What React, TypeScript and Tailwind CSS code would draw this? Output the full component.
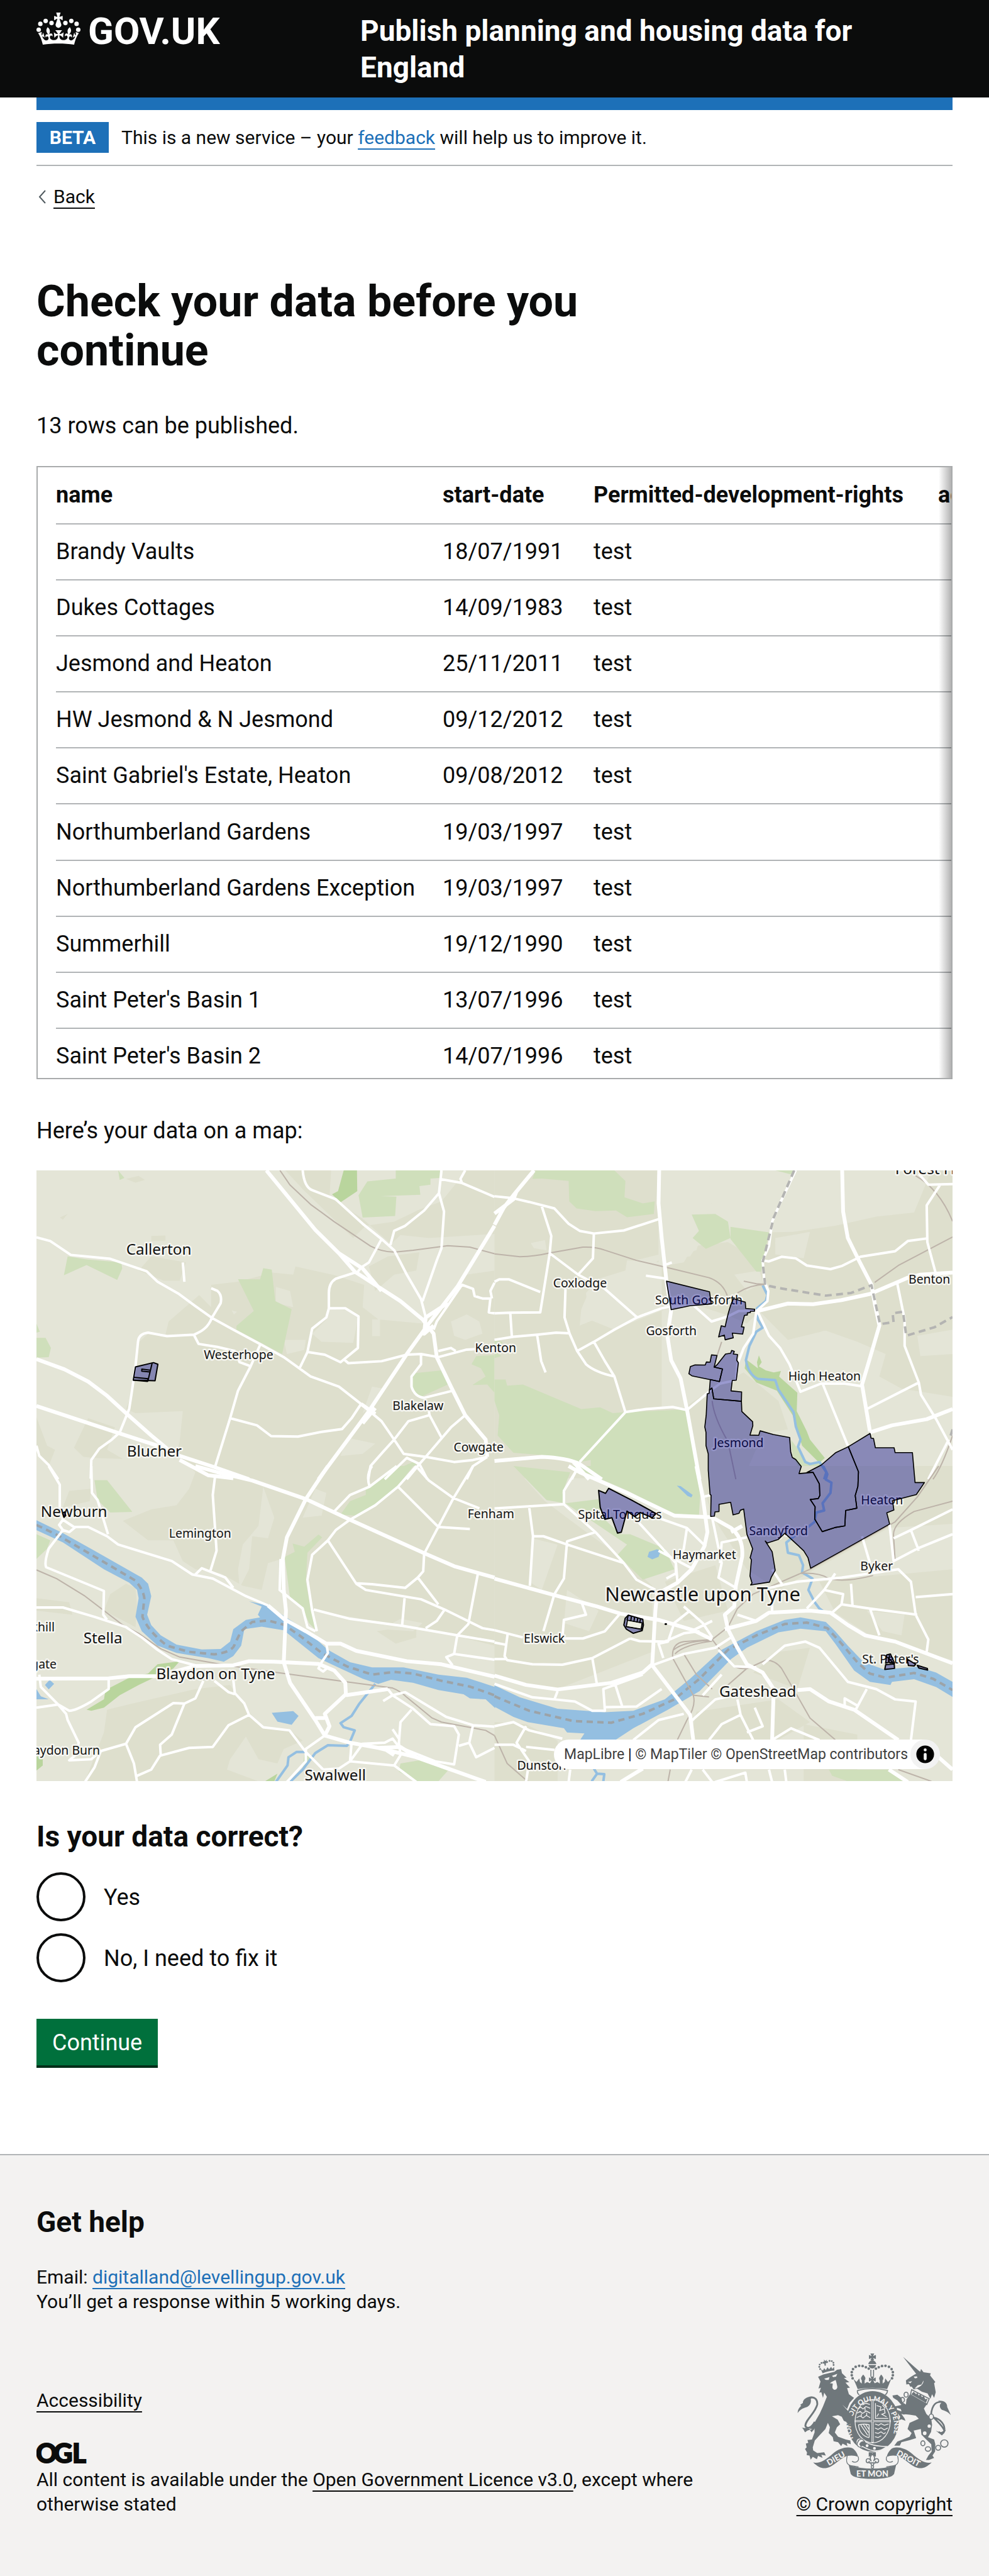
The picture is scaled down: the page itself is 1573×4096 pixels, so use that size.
import React from "react";

const columns = ["name", "start-date", "Permitted-development-rights", "address"];

const rows: [string, string][] = [
  ["Brandy Vaults", "18/07/1991"],
  ["Dukes Cottages", "14/09/1983"],
  ["Jesmond and Heaton", "25/11/2011"],
  ["HW Jesmond & N Jesmond", "09/12/2012"],
  ["Saint Gabriel's Estate, Heaton", "09/08/2012"],
  ["Northumberland Gardens", "19/03/1997"],
  ["Northumberland Gardens Exception", "19/03/1997"],
  ["Summerhill", "19/12/1990"],
  ["Saint Peter's Basin 1", "13/07/1996"],
  ["Saint Peter's Basin 2", "14/07/1996"],
];

type Tile = {
  matrix: string;
  land?: string;
  urban?: string;
  holes?: string;
  green?: string;
  darkGreen?: string;
  water?: string;
  stream?: string;
  rail?: string;
  minor?: string;
  major?: string;
  ferry?: string;
  boundary?: string;
};

// Each tile keeps its own coordinate grid; the matrix places it on the 1500x1000 map.
const tiles: Tile[] = [
  {
    matrix: "matrix(0.51658 0 0 0.33333 -60 -16)",
    urban:
      "M525 855L535 790L632 660L670 720L670 610L755 595L865 550L930 560L937 520L1060 562L1155 610L1150 720L1200 780L1340 800L1380 760L1480 560L1568 540V1565H615L620 1530L560 1440L570 1380L580 1230L430 1240L400 1220L420 1140L435 900L470 850ZM905 48H1050L1045 180L1150 285L1240 410L1270 365L1360 380L1568 360V48H1480L1400 200L1330 240L1250 300L1160 320L1120 380L960 140ZM440 540L480 470L590 500L570 590L520 590ZM480 370L525 368L525 395L480 395ZM200 290L215 262L190 280ZM400 90L440 75L460 95L430 108ZM235 1410L280 1265L365 1310L340 1420L390 1465L300 1460L265 1455ZM116 1260L150 1400L175 1420L155 1500L116 1440ZM1170 520L1230 470L1330 450L1320 540L1250 560L1190 640Z",
    holes:
      "M1045 730L1100 735L1137 765L1120 895L1020 890L990 850L1035 780ZM1430 790L1480 755L1520 790L1530 850L1475 880L1440 860ZM875 620L920 640L930 720L875 700ZM900 880L970 880L965 930L910 950ZM1100 1360L1190 1390L1150 1440L1080 1450ZM1180 1110L1215 1120L1190 1200L1150 1240ZM1180 780H1205V862H1180ZM735 735L752 742L742 756Z",
    green:
      "M203 563L215 470L275 485L385 500L388 530L372 586L275 513ZM755 582L825 583L835 528L862 535L873 690L925 730L895 950L750 830V812L805 738ZM1165 102L1255 88V48H1395V85L1365 88V118L1330 125L1333 168L1205 175L1257 177L1253 272L1150 280L1137 170ZM116 870H145L162 920L155 965L116 968ZM1308 1045L1400 1030L1420 1100L1335 1160L1308 1140ZM1510 960L1568 955V1140L1545 1100L1498 1102L1540 1060L1525 1020L1495 1000ZM375 48L395 85L380 95ZM1250 1520L1310 1480L1320 1490L1290 1560H1240ZM116 800L127 840L116 845Z",
    darkGreen: "M1090 48H1132L1133 150L1080 205L1053 165L1072 150Z",
    rail: "M888 48L920 120L985 215L1060 300L1175 420C1200 440 1230 452 1260 448L1310 440L1420 418L1490 425L1568 457",
    minor:
      "M116 377L160 395L225 463L350 482L465 543L500 595L568 655L620 715L672 772L740 830L830 905L900 965L985 1060L1075 1110L1145 1195L1210 1280L1250 1370L1280 1440L1350 1455L1440 1480L1500 1470L1545 1455M672 772C660 820 640 840 615 855L530 862L470 845Q440 850 438 890L430 1010L418 1140L410 1220L380 1335L355 1370L315 1415L290 1470L288 1562M672 772L700 700Q705 660 690 640L670 627M615 855L630 900L690 915L745 935L760 990L795 1010M825 905L795 1010L755 1130L730 1265L683 1500M730 1265L815 1300L860 1353L945 1355L1020 1332L1085 1318L1115 1265L1145 1195M1125 550L1065 580Q1043 600 1043 650V725L1035 770L990 825L975 940L950 1020M1043 725H1095L1137 765L1135 920L1080 990L1030 953L975 940M1090 975L1105 995L1210 985L1290 953L1335 950L1390 965L1480 928L1568 920M1335 950V1000L1305 1060V1110Q1315 1160 1345 1165L1435 1130M960 48Q965 130 990 145L1065 190L1150 310L1210 385L1250 440L1290 560L1335 680L1350 770M1400 48L1392 160L1408 250L1400 430L1385 490L1340 690M1395 90L1465 110L1568 178M1475 48L1460 90L1465 110M1392 160L1345 245L1285 320L1250 345L1238 415M1210 385L1170 500L1145 525L1130 555M1375 830L1385 790L1465 610L1500 630L1505 665L1530 677L1555 677L1550 745L1568 750M1475 1250L1430 1310L1350 1455L1330 1490L1290 1565M1360 1230L1362 1250L1295 1280L1250 1370L1215 1430L1175 1500L1168 1565M1362 1250L1400 1360M116 1400L125 1450L155 1495L185 1565M580 500L585 595M1220 1565L1290 1460L1330 1490L1355 1565M1545 1455L1500 1500L1480 1565M1390 935L1430 920L1445 935M1568 600L1555 640L1560 677",
    major:
      "M845 48L1000 340L1075 455L1125 545L1190 610L1270 690L1340 780L1375 850L1385 965L1430 1110L1475 1250L1540 1370L1545 1455M1568 320L1450 620L1355 810L1290 950L1170 1230L1010 1565M1420 700L1350 770L1345 850L1375 810M1075 455L1150 530L1210 640M116 975L205 1025L280 1085L340 1155L400 1240L480 1350L550 1440L680 1505L790 1565M116 1205L370 1335L530 1415M570 1470L660 1545L740 1560M1145 1195L1190 1245M1190 1215L1150 1290",
  },
  {
    matrix: "matrix(0.51658 0 0 0.33333 750 -16)",
    urban:
      "M0 48H520V500L420 490L415 540L330 580L290 650L300 780L380 830L540 730L620 700L740 760L800 800L840 740L930 880L1050 835L1150 890L1240 950L1220 1060L1290 1120L1452 1160V48H1385L1330 255L1210 275L1110 310L1080 320L945 350L870 352L850 500L740 400L630 420L600 500L530 520V1220L600 1215L700 1110L790 1040L900 1180L930 1320L850 1340L790 1560H0Z",
    holes:
      "M525 48H680L690 240L600 262L585 270L595 405L650 390L640 440L540 480ZM115 405L160 390L165 440L125 430ZM300 640L360 700L350 760L270 810L275 730ZM420 500L600 430L650 400L620 470L520 490L430 600ZM760 560L840 540L850 600L800 640ZM930 900L960 885L1045 835L1120 880L1235 950L1225 1030L1170 1110L1060 1090L960 1120L930 1010ZM1340 860L1452 830V950L1350 960ZM980 1250L1070 1210L1090 1270L1010 1330ZM1200 1180L1280 1190L1270 1260L1200 1290ZM790 390L850 370L830 545ZM890 380L1000 350L980 480L890 460Z",
    green:
      "M120 90L130 48H380L415 100L412 180L470 210L508 200L505 262L420 278L385 245L320 248L260 235L237 200L235 100L150 88ZM625 265L700 262L740 300L748 380L670 433L628 380L648 345ZM748 325L870 352L845 545H830L748 385ZM0 1075H35L40 1105L90 1100L275 1220L335 1212L375 1240L415 1235L610 1222L655 1565H330L305 1500V1470L270 1480L185 1450L60 1435L10 1350L15 1250L0 1180ZM890 48H950L945 70ZM940 1370L990 1480L1040 1490L975 1535L945 1450ZM0 885L25 890L20 920L0 915ZM0 935L22 960L0 970Z",
    darkGreen:
      "M797 975L835 1020L832 990L838 957L847 990L838 1010L860 1030L885 1040L908 1033L902 1060L960 1140L958 1230L990 1330L1000 1370L1047 1460L1030 1485L975 1400L945 1250L895 1130L830 1090L793 1020Z",
    stream:
      "M850 613L865 660L860 690L832 725L835 780L850 820L830 840L808 910L797 980Q805 1050 835 1072L890 1078L900 1125L948 1235L955 1305L970 1370L962 1405L985 1480L1000 1490L1030 1480L1052 1530L1045 1565",
    rail: "M0 458L80 472Q130 470 170 455L280 425Q320 422 350 440L450 490L560 530L680 575Q725 600 738 665M790 592L830 605L860 608Q810 610 770 650M1205 598L1280 515L1452 375M1335 75Q1410 140 1452 298M1452 1350Q1420 1500 1390 1565M720 890L705 960M690 1180Q695 1260 740 1380L765 1565",
    minor:
      "M0 175L60 185L110 203L190 235L235 310L270 345L315 358L410 343L520 288M150 225L180 370L175 455L160 600L145 745L50 747L0 750M315 358L312 480L265 560M175 455L265 560L350 630L452 770M0 595L15 583H45L145 645M50 747L55 865M225 630L222 770L238 850L262 935L290 1000Q320 1040 380 1060M0 880L60 865L135 855L195 845L238 848M135 855L148 985L162 1040M262 935L315 890L380 830L452 770L530 725L560 715L630 710L688 790L740 765L775 738L830 738M315 890L350 985L380 1060L415 1235L480 1220L565 1210L610 1225L680 1135L715 1095L760 1080M415 1235L270 1480M245 1565L270 1490M850 490L870 495L910 472L955 480L990 515L1065 533L1100 518L1160 472L1270 445L1310 395L1372 382M955 48L905 210L880 300L870 420L850 490L855 590L868 640L865 690L830 740L820 850L790 920L770 1000L765 1080M1452 115L1375 118L1345 65M1412 120L1370 220L1372 400L1398 550M835 745L870 860L905 920L935 1000L970 1135L1035 1095L1110 1095L1165 1108M1040 1095L1120 1400M1275 590L1300 780V910L1345 1090L1352 1150L1400 1270L1452 1420M1345 1090L1180 1220M1440 1370L1375 1565M480 565L545 580M545 510L562 500",
    major:
      "M0 315L30 230L60 170L125 48M0 260L60 190L70 150M522 48L520 210L530 380L545 590L560 735L548 860L560 980L590 1070L610 1222L650 1565M1102 48L1105 250L1120 380L1155 490L1195 610L1205 700L1220 810L1190 970L1165 1100L1190 1330M830 740L930 702L1010 705L1100 685L1190 655L1310 575L1350 560L1452 550M1190 1335L1260 1300L1370 1270L1452 1220M0 1475L150 1455Q230 1460 270 1490L340 1565M250 1480L300 1565",
    boundary:
      "M950 48L885 280L850 500L858 612L910 628L1050 663L1130 650L1195 612L1222 803L1265 793L1262 750L1295 742L1305 860L1395 818L1452 768M1452 1320L1446 1350",
  },
  {
    matrix: "matrix(0.51658 0 0 0.33801 -60 484)",
    urban:
      "M620 30L700 0H1568V870L1440 820L1000 700L960 690L930 560L905 440L895 450L850 470L830 600L770 580L700 520L620 500L580 460L550 360L470 360L390 265L480 210L560 190L600 110ZM420 1150L620 1080L730 1060L790 1190L830 1270L920 1280L960 1330L900 1370L880 1440L820 1420L780 1310L730 1420L720 1470L820 1527H270L330 1290L340 1180ZM330 700L350 620L400 570L430 590L435 680L430 780L380 740ZM116 640L220 660L230 720L116 700ZM1195 800L1320 770V830L1255 860ZM220 120L290 110L285 170L200 200Z",
    holes: "M835 100L870 250L850 350L800 340L790 500L760 590L755 500L770 380L820 290ZM1000 110L1035 130L1020 240L960 250ZM1270 740L1340 760L1310 800L1210 790Z",
    green:
      "M300 68H340L420 222L350 225L310 165ZM903 440L935 415L928 375L965 390L1010 332L1022 345L975 420L970 560L985 690L1005 800L980 760L960 690L920 640ZM1080 235L1110 170L1160 140V115L1250 0H1310L1260 100L1190 190L1130 240ZM116 330L160 360L150 400L116 450ZM1270 1440L1330 1425L1420 1475L1390 1527H1320L1265 1480ZM965 1400L990 1410L960 1460Z",
    darkGreen:
      "M275 1180L330 1130L335 1085L410 1025L470 1005L500 960L570 945L550 980L440 1060L380 1110L330 1170L290 1185ZM116 1405H136V1450L116 1475ZM840 1527L880 1490L870 1527Z",
    water:
      "M116 262L200 325L300 410L450 540L470 570L480 630L467 720L480 770L510 820L560 865L640 888L700 886L730 850L740 790L780 745L825 733L818 720L830 680L790 655L850 675L900 725L975 800L1040 890L1110 950L1180 975L1280 975L1390 1010L1480 1025L1570 1070V1172L1540 1130L1490 1125L1470 1105L1390 1085L1310 1050L1240 1035L1200 1055L1150 1030L1080 980L1010 930L900 795L830 778L775 790L765 870L740 920L710 948L660 930L560 905L500 870L450 800L430 730L440 640L435 600L410 565L330 500L200 370L116 310ZM862 1195L930 1187L947 1210L925 1253L880 1238ZM158 1035L172 1055L155 1082L143 1060ZM116 1080L130 1115L155 1130L116 1130Z",
    stream:
      "M1190 1055L1140 1150L1115 1210L1080 1245L1090 1265L1125 1280L1110 1335L1100 1355L1040 1352L1000 1390L960 1470L920 1530M970 1385L940 1385L915 1410L912 1450L875 1530",
    rail: "M116 503L180 545L270 630L390 770L440 810L510 885L570 925L720 965L880 1000L1100 1045L1245 1075Q1270 1090 1290 1120L1370 1220L1400 1240L1540 1280L1568 1305",
    minor:
      "M155 0L190 90L190 200L200 260L235 295H280L340 340L375 380L545 460L610 525L675 545L780 630L850 675M290 0L292 130L310 165L343 330M200 260L188 285L200 310L155 400Q140 470 147 490L330 605L328 720L340 745M200 310L220 320L240 295M116 685H200L300 730L400 780L450 830L500 890L545 935L620 965M345 1028V1080L290 1140Q240 1185 220 1185L185 1155L130 1070L125 1010M116 1170L185 1155L210 1200L215 1230L250 1340L240 1400L220 1425L290 1420L320 1380L400 1345M645 1040L620 1125L585 1150L545 1300L508 1350L510 1402L600 1365L675 1360L725 1255L790 1205M585 1150L550 1148L430 1265L400 1345L425 1440L435 1530M435 1500L480 1470L508 1402M320 1380L300 1460L270 1530M740 1035L745 1100L775 1150L790 1205L835 1265L918 1280L970 1385L1025 1470M680 1040L725 1095L745 1105M1030 1305L970 1370V1430L910 1530M683 40L675 140L687 410L668 505M620 525L640 495L715 540L740 590M890 450L887 600L960 690L975 780L1000 800M1110 260L1065 310L1040 360L990 430L975 550L990 700L1005 800M1320 0L1262 100L1190 190L1110 260M1262 100L1390 295L1490 305M1325 10L1360 70L1438 155L1520 205M1500 0L1438 155L1345 425L1342 510L1325 540L1285 590L1180 572L1130 568M1040 360L1130 570L1160 600L1335 645L1410 695L1530 785L1568 795M1325 540L1390 670M1410 695L1385 750L1350 785M1283 640L1275 775M1515 525L1485 765L1450 820L1440 910M995 695L1110 740L1280 775L1450 820L1568 850M1568 938L1440 910L1415 925L1435 965M1035 860L1040 905L1020 950L1010 980L1025 995L1040 975M1230 1080L1245 1110L1310 1175L1365 1250L1440 1260L1455 1300L1440 1445L1380 1430L1265 1360L1245 1320L1220 1340L1150 1345L1110 1430M1245 1110L1285 1095L1415 1215L1500 1255L1568 1262M1305 1180L1270 1240L1265 1340L1270 1400L1250 1450L1110 1430L1115 1340M1250 1450L1320 1530M1110 1430L1075 1465L1025 1470M1500 1255L1488 1340L1510 1410L1568 1365M1488 1340L1455 1355M1245 1110L1215 1138M1180 0Q1160 40 1172 100M1258 0L1172 100L1110 140L1060 220M1245 1275L1265 1320",
    major:
      "M620 0L690 30L800 70L970 160L1110 260L1350 425L1440 485L1568 540M1040 0L970 160L910 345L897 450L900 600L907 700L900 950L920 1050L1000 1230L1030 1305L1110 1340L1200 1365L1320 1410L1540 1530M850 675L900 740L970 800L1035 860H1080L1130 895L1290 945L1400 960L1568 1020M116 1030L345 1028L410 1018L500 1018L620 968L740 965L790 945L870 948L1010 958L1060 990L1095 1050L1097 1105L1030 1200L1045 1260L1030 1305M1000 1220H1030M1097 1110L1230 1080M1200 1365L1270 1360L1320 1410M1220 1370L1250 1400",
    ferry:
      "M116 285L190 340L330 465L430 555Q455 600 458 640L452 730Q470 800 530 870L600 900L680 912Q740 900 745 860L765 800L800 755L850 748L900 768L950 820L1020 905L1100 970L1180 1010L1250 997L1310 1005L1400 1040L1490 1068L1568 1110",
  },
  {
    matrix: "matrix(0.51658 0 0 0.33801 750 484)",
    urban:
      "M0 0L60 0L160 170L300 330L400 440L500 580V900L200 1080L0 1030ZM1030 560L1452 500V940L1200 830L1080 710ZM640 1190L900 1130L1000 1240L900 1325H620ZM0 1240L100 1250L200 1330V1527H0ZM540 560L700 480L740 700L600 750ZM640 0H1452V280L1250 300L900 600L800 500L690 240ZM980 1250L1150 1300V1527H980ZM820 1000L900 900L1000 880L960 1080Z",
    holes: "M120 350L200 380L150 600L110 560ZM230 600L330 700L300 800L220 760ZM1180 700L1300 720L1290 820L1230 800ZM290 40L350 0L420 100L350 90ZM560 80L640 90V200L590 190Z",
    green:
      "M60 0L240 30L215 130L225 180L165 165ZM240 0H640L652 145L648 242L560 228L420 118ZM225 180L330 160L350 260L400 330L430 330L540 400L570 500L470 550L390 430L420 380ZM1060 1470H1250L1300 1527H1120L1070 1500Z",
    water:
      "M0 1062L80 1120L200 1175L350 1192L440 1185L540 1130L620 1030L720 890L830 800L920 745L970 733L1050 755L1080 800L1120 870L1170 950L1235 985L1340 972L1400 1000L1452 1045V1118L1400 1070L1330 1032L1260 1045L1255 1060L1190 1045L1140 990L1080 860L1050 800L970 788L900 805L800 880L750 935L650 1090L550 1180L440 1270L380 1330H270L285 1295L230 1290L220 1270L105 1240L60 1215L-1 1165ZM490 415L515 403L527 410L520 440L500 452L485 440ZM578 95L590 97L628 140L624 152L612 145Z",
    stream:
      "M1042 0L1055 40L1050 65L1068 80L1065 130L1040 180L1045 215L1020 225L1015 270L990 300L950 340L925 370L930 420L965 432L978 480L975 515L1008 545L995 600L1015 660L1030 690L1043 705M315 1465L325 1490L348 1492L345 1527M325 1490L308 1527",
    rail: "M1408 0L1340 150L1270 270L1000 500L820 620L770 690L740 780L690 840L600 850Q560 860 565 930L630 1110Q640 1160 610 1230L580 1325M690 840L730 920L760 970Q790 990 810 975L860 940Q890 940 910 980L1000 1220L1080 1325M1452 170L1330 220Q1260 280 1265 340L1270 460M970 520Q1030 515 1060 545Q1110 565 1200 530M568 890Q600 850 680 845M572 910Q600 865 690 848M740 1060L800 980M630 1110L680 1118M0 1305L40 1440L105 1527M557 1470L550 1527M1280 1470L1385 1527M600 910L640 1010L690 1080",
    minor:
      "M260 20L220 120L220 185L0 205M220 185L320 320L410 470L450 550L510 600M110 200L122 340L112 580M122 340H155L230 380L410 470M320 320L230 365L220 545L190 620L155 800M275 655L290 720L220 745L215 835L280 835L350 800L395 720M0 795L90 830M0 855L35 865M42 810L32 920L40 940L120 960L215 962L310 930L430 835M0 935H40M310 930L325 1060M430 835L460 848L540 850L600 810L650 800M0 1055L120 1120L190 1130L255 1140L310 1185H350L345 1080L470 1010M200 1090L190 1130M350 1168L450 1165L530 1080M380 1045L405 1165M455 270L575 470L580 565M480 230L610 300L600 400L590 440M610 300L670 390M520 410L625 495M575 470L575 520L545 545M690 250L720 470L710 540L765 590M800 345L720 370L715 470M880 500L915 580M1252 283L1265 460L1340 400L1452 330M1452 210L1320 310L1265 350M1320 310L1345 410M1165 340L1190 470M870 590L960 560L1100 540L1280 500L1320 560L1335 720L1375 840L1370 900M1080 520L1045 600L1105 620L1100 670L1070 710M1130 570L1135 680M1335 635L1452 620M1100 670L1190 690L1340 720M1190 690L1220 820M1045 600L990 690M500 965L600 910L700 880L750 830M535 930L520 860L550 850L570 760L620 700M600 680L660 760L690 830M770 720L830 750M850 960L920 870L985 850L1030 880L1120 1045L1210 1080L1270 1130L1335 1140L1320 1327M1180 1080L1145 1180M1110 1165V1125L1150 1160M770 1130L780 1205L720 1250L680 1327M780 1205L820 1327M880 1327L940 1270L1030 1327M825 1170L850 1260L800 1290M440 1327L520 1230L600 1200M620 1240L700 1130L760 1110M710 890L760 970L830 975M660 1110L720 1010M0 1260L60 1240L110 1280L215 1320M100 1260L70 1340L110 1430L100 1530M0 1350H60L100 1380M100 1360L190 1375M240 1470L235 1530M625 1470L605 1530M660 1470L690 1530M870 1470L880 1530M700 1530L795 1485L800 1530M920 1470L925 1530M630 795L690 750M880 600V700M660 150L685 140",
    major:
      "M235 0L270 30L420 130L570 240L690 248L750 300Q790 350 785 440L765 580L760 680L730 720L740 790L770 880L800 960L850 1000L885 1080L880 1327M640 0L660 150L675 320L665 390L625 500L580 565L515 620L510 700L500 960L470 1000L370 1050L200 1082L100 1060L0 1015M0 545L190 625L325 680L400 715L520 745L630 795L690 840M500 965L620 1205L630 1327M730 790L830 750L870 710L1000 700L1065 710L1120 770L1175 820L1270 850L1452 955M960 1085L1000 1080L1060 1140L1140 1180L1280 1327M400 1530L470 1465M1250 1470L1310 1530M1400 1400L1452 1470M785 290L750 320",
    ferry:
      "M0 1115L110 1185L250 1235L370 1243L470 1200L570 1130L650 1030L740 890L830 820L920 765L990 758L1055 785L1100 860L1150 950L1190 1005L1240 1025L1330 1002L1390 1030L1452 1085",
  },
];

const labels: [string, number, number, number][] = [
  ["Callerton", 147, 138, 25],
  ["Westerhope", 274, 309, 20],
  ["Blucher", 148, 468, 25],
  ["Blakelaw", 583, 392, 20],
  ["Cowgate", 683, 460, 20],
  ["Kenton", 718, 298, 20],
  ["Coxlodge", 846, 191, 20],
  ["South Gosforth", 1013, 219, 20],
  ["Gosforth", 998, 270, 20],
  ["High Heaton", 1231, 344, 20],
  ["Benton", 1428, 185, 20],
  ["Forest Hall", 1406, 6, 25],
  ["Jesmond", 1109, 453, 20],
  ["Newburn", 7, 567, 25],
  ["Lemington", 217, 601, 20],
  ["Fenham", 706, 569, 20],
  ["Stella", 77, 774, 25],
  ["Blaydon on Tyne", 196, 833, 25],
  ["Swalwell", 439, 999, 25],
  ["Spital Tongues", 887, 570, 20],
  ["Haymarket", 1042, 636, 20],
  ["Sandyford", 1167, 597, 20],
  ["Heaton", 1350, 547, 20],
  ["Byker", 1349, 655, 20],
  ["Newcastle upon Tyne", 931, 705, 32],
  ["Elswick", 798, 773, 20],
  ["Gateshead", 1118, 862, 25],
  ["St. Peter's", 1352, 807, 20],
  ["Dunston", 787, 981, 20],
];

const clippedLabels: [string, number, number][] = [
  ["khill", 30, 755],
  ["gate", 33, 815],
  ["Blaydon Burn", 104, 956],
];

function TileBase({ t }: { t: Tile }) {
  return (
    <g transform={t.matrix}>
      <path d={t.urban} fill="#dedfcd" />
      <path d={t.holes} fill="#e4e5d7" />
      <path d={t.green} fill="#cfdfbb" />
      <path d={t.darkGreen} fill="#b9d59d" />
    </g>
  );
}

function TileWater({ t }: { t: Tile }) {
  return (
    <g transform={t.matrix} fill="none" strokeLinejoin="round">
      <path d={t.water} fill="#94bfe1" />
      <path d={t.stream} stroke="#94bfe1" strokeWidth="4" vectorEffect="non-scaling-stroke" />
      <path d={t.ferry} stroke="#9ca3a8" strokeWidth="4" strokeDasharray="10 7" vectorEffect="non-scaling-stroke" />
    </g>
  );
}

function TileLines({ t }: { t: Tile }) {
  return (
    <g transform={t.matrix} fill="none" strokeLinejoin="round">
      <path d={t.rail} stroke="#bdb3a9" strokeWidth="2" vectorEffect="non-scaling-stroke" />
      <path d={t.minor} stroke="#fff" strokeWidth="4" vectorEffect="non-scaling-stroke" />
      <path d={t.major} stroke="#fff" strokeWidth="6" vectorEffect="non-scaling-stroke" />
      <path d={t.boundary} stroke="#b4b4b2" strokeWidth="4" strokeDasharray="11 7" vectorEffect="non-scaling-stroke" />
    </g>
  );
}

function MapDrawing() {
  return (
    <svg viewBox="0 0 1500 1000" className="block w-full" role="img" aria-label="Map of your data around Newcastle upon Tyne">
      <rect width="1500" height="1000" fill="#e4e5d7" />
      {tiles.map((t, i) => (
        <TileBase key={i} t={t} />
      ))}
      {tiles.map((t, i) => (
        <TileWater key={i} t={t} />
      ))}
      {tiles.map((t, i) => (
        <TileLines key={i} t={t} />
      ))}
      <g fontFamily="'Noto Sans', sans-serif" fill="#111" stroke="#f5f5f0" strokeWidth="5" strokeLinejoin="round" paintOrder="stroke">
        {labels.map(([name, x, y, size]) => (
          <text key={name} x={x} y={y} fontSize={size}>
            {name}
          </text>
        ))}
        {clippedLabels.map(([name, x, y]) => (
          <text key={name} x={x} y={y} fontSize="20" textAnchor="end">
            {name}
          </text>
        ))}
      </g>
      <g fill="#000088" fillOpacity="0.4" stroke="#000" strokeLinejoin="round">
        <g transform="matrix(0.33333 0 0 0.33333 1020 124)" strokeWidth="5">
          <path d="M35 172L246 224L255 284L150 293L58 312Z" />
          <path d="M365 258L422 275L424 306L468 310L467 320L447 320L447 326L432 328L432 338L418 340L403 396L416 398L409 432L358 427L363 450L323 460L319 437L291 446L304 391L323 396Q345 290 365 258Z" />
          <path d="M256 534L283 537L269 594L310 603L295 665L160 637L145 627L152 592L175 583L225 584L231 569L249 570Z" />
          <path d="M283 583L325 530L350 526L355 512L368 517L363 530L384 532L380 560L388 573L378 658L358 660L352 711L404 716L403 762L267 750L258 697L246 706L250 655L295 665L310 603L269 594Z" />
          <path d="M246 706L258 697L267 750L403 762L405 812L458 862L459 882L445 928L488 929L495 907L560 925L640 940L645 1010L653 1038L670 1048L697 1082L686 1117L755 1111L786 1168L788 1225L780 1240L741 1244L765 1280L763 1340L800 1402L862 1382L911 1374L915 1298L970 1287L962 1225L975 1180L978 1108L928 985L1035 920L1040 943L1052 945L1061 990H1153L1158 1014H1243L1256 1161H1302L1262 1220L1145 1250L1152 1296L1117 1310L1131 1365L890 1500L743 1582L730 1530L709 1496L616 1410L585 1440L530 1458L520 1448L554 1501L569 1592L550 1625L541 1650L448 1664L455 1655L445 1620L452 1540L446 1530L458 1486L440 1440L430 1415L414 1291L398 1297L391 1312L362 1320L350 1258L293 1268V1303L273 1305L270 1326L252 1327L254 1223L249 1220L240 1100V1020L229 980V915L223 888L230 830L235 725L244 723Z" />
          <path d="M725 1111L795 1075L865 1015L928 985L978 1108L975 1180L962 1225L970 1287L915 1298L911 1374L862 1382L800 1402L763 1340L765 1280L741 1244L780 1240L788 1225L786 1168L755 1111Z" />
        </g>
        <g transform="matrix(0.51658 0 0 0.33801 750 484)" strokeWidth="2">
          <path vectorEffect="non-scaling-stroke" d="M330 118L352 132L362 108L435 165L512 230L500 250L462 225L445 245L420 218L402 320L390 325L372 250L350 258L335 200Z" />
          <path vectorEffect="non-scaling-stroke" fillRule="evenodd" d="M424 722L470 742L472 770L468 797L440 810L418 790L410 770L414 738ZM422 747L468 760L465 790L418 778Z" />
          <path d="M423 750L466 762L463 786L420 775Z" fill="#eeefe2" fillOpacity="1" stroke="none" />
          <path vectorEffect="non-scaling-stroke" d="M424 722L420 747M434 727L432 750M444 731L442 753M454 736L452 757M463 740L460 759" />
          <path vectorEffect="non-scaling-stroke" d="M1243 915L1255 910L1268 955L1250 950L1240 955ZM1240 962L1267 958L1268 980L1237 985ZM1245 925L1262 950M1250 950L1252 915M1308 935L1335 960L1330 968L1312 966ZM1340 965L1372 980L1373 988L1345 978Z" />
          <ellipse cx="543" cy="765" rx="4" ry="5" fill="#000" fillOpacity="1" stroke="none" />
        </g>
        <g transform="matrix(0.51658 0 0 0.33333 -60 -16)" strokeWidth="2">
          <path vectorEffect="non-scaling-stroke" d="M430 1013L487 992L501 1000L492 1081L423 1078Z" />
          <path vectorEffect="non-scaling-stroke" fill="none" d="M483 993L469 1084M476 1029L450 1024V1034L476 1038M424 1064L470 1071L468 1084L423 1078" />
        </g>
        <path d="M43 561L46 559L48 565L45 568Z" strokeWidth="2" />
      </g>
    </svg>
  );
}

function CrownLogo() {
  const pearls = [
    [41, 117],
    [49, 88],
    [75, 74],
    [104, 84],
    [172, 84],
    [201, 74],
    [227, 88],
    [235, 117],
  ];
  return (
    <svg viewBox="30 33 216 157" className="h-[51px] w-[70px] shrink-0" fill="#fff" aria-hidden="true">
      {pearls.map(([x, y]) => (
        <circle key={x} cx={x} cy={y} r="11" />
      ))}
      <path
        transform="translate(36 33) scale(6.35)"
        d="M17 4.7l2.3 1.2V2.5l-2.3.7-.2-.2.9-3h-3.4l.9 3-.2.2c-.1.1-2.3-.7-2.3-.7v3.4L15 4.7c.1.1.1.2.2.2l-1.3 4c-.1.2-.1.4-.1.6 0 1.1.8 2 1.9 2.2h.7c1-.2 1.9-1.1 1.9-2.1 0-.2 0-.4-.1-.6l-1.3-4c-.1-.2 0-.2.1-.3"
      />
      <path
        transform="translate(38 -2) scale(6.25 6.4)"
        d="M16 29.2c4.4 0 8.6.3 12.3.8 1.1-4.5 2.4-7 3.7-8.8l-2.5-.9c.2 1.3.3 1.9 0 2.7-.4-.4-.8-1.1-1.1-2.3l-1.2 4c.7-.5 1.3-.8 2-.9-1.1 2.5-2.6 3.1-3.5 3-1.1-.2-1.7-1.2-1.5-2.1.3-1.2 1.5-1.5 2.1-.1 1.1-2.3-.8-3-2-2.3 1.9-1.9 2.1-3.5.6-5.6-2.1 1.6-2.1 3.2-1.2 5.5-1.2-1.4-3.2-.6-2.5 1.6.9-1.4 2.1-.5 1.9.8-.2 1.1-1.7 2.1-3.5 1.9-2.7-.2-2.9-2.1-2.9-3.6.7-.1 1.9.5 2.9 1.9l.4-4.3c-1.1 1.1-2.1 1.4-3.2 1.4.4-1.2 2.1-3 2.1-3h-5.4s1.7 1.9 2.1 3c-1.1 0-2.1-.2-3.2-1.4l.4 4.3c1-1.4 2.2-2 2.9-1.9-.1 1.5-.2 3.4-2.9 3.6-1.9.2-3.4-.8-3.5-1.9-.2-1.3 1-2.2 1.9-.8.7-2.3-1.2-3-2.5-1.6.9-2.2.9-3.9-1.2-5.5-1.5 2-1.3 3.7.6 5.6-1.2-.7-3.1 0-2 2.3.6-1.4 1.8-1.1 2.1.1.2.9-.3 1.9-1.5 2.1-.9.2-2.4-.5-3.5-3 .6 0 1.2.3 2 .9l-1.2-4c-.3 1.1-.7 1.9-1.1 2.3-.3-.8-.2-1.4 0-2.7l-2.9.9C1.3 23 2.6 25.5 3.7 30c3.7-.5 7.9-.8 12.3-.8"
      />
    </svg>
  );
}

function RoyalArms() {
  const ink = "#6f777b";
  const paper = "#f3f2f1";
  const pearls = [
    [401, 222], [397, 207], [397, 192], [403, 177], [416, 166], [433, 161], [450, 162], [466, 168], [480, 175],
    [594, 222], [598, 207], [598, 192], [592, 177], [579, 166], [562, 161], [545, 162], [529, 168], [515, 175],
  ];
  return (
    <svg viewBox="130 100 754 616" className="w-[245px]" fill={ink} aria-hidden="true">
      {/* crown */}
      {pearls.map(([x, y], i) => (
        <circle key={i} cx={x} cy={y} r="6.5" />
      ))}
      <path d="M488 101H507L501 113L515 108V128L501 123L507 134H488L494 123L481 128V108L494 113ZM497 134C512 136 516 146 517 152H478C479 146 484 136 497 134ZM479 157H516C514 168 506 174 497 174S481 168 479 157ZM488 180H493V212H488ZM501 180H506V212H501Z" />
      <path d="M405 225L420 240L434 222L437 240L446 248L446 232C436 222 448 210 453 204C458 210 470 222 460 232V248L472 240L486 246L494 232L481 238V218L494 225L488 213H507L501 225L514 218V238L502 232L509 246L523 240L534 248V232C526 222 536 210 541 204C546 210 558 222 548 232V248L558 240L561 222L574 240L590 225L578 255L570 275Q497 262 426 275L418 255Z" />
      <path d="M424 282Q497 262 572 282Q570 300 560 302M424 282Q424 298 434 302" fill="none" stroke={ink} strokeWidth="5" />
      {/* garter */}
      <ellipse cx="499" cy="433" rx="128" ry="148" />
      <ellipse cx="499" cy="432" rx="88" ry="108" fill={paper} />
      <ellipse cx="499" cy="432" rx="84" ry="104" />
      <path d="M494 326H504V538H494ZM412 427H588V436H412Z" fill={paper} />
      <path d="M497 330H501V534H497ZM416 430H584V433H416Z" />
      <g fill="none" stroke={paper} strokeWidth="4" strokeLinecap="round">
        <path d="M428 372L440 362L452 372L466 360L486 368M424 392L438 384L450 394L468 382L486 392M422 414L438 406L452 416L468 404L486 414M450 352L466 344L484 350M462 368V380M444 396V406M470 392V402" />
        <path d="M513 345V418H574M520 356L540 362L534 380L556 372L560 392L544 398L566 410M528 396L520 408M548 354L560 368" />
        <path d="M430 450C450 445 470 446 482 450V510M430 450C432 480 450 505 480 512M442 452L474 500M454 450L478 486M466 450L480 470" />
        <path d="M512 446L528 452L540 444L556 452L576 446M512 466L526 472L540 464L556 474L572 466M512 488L526 492L540 484L554 494L562 488M512 508L526 512L540 504" />
      </g>
      <path id="garter" d="M408 524A106 126 0 1 1 590 524" fill="none" />
      <text fill={paper} fontFamily="Lato, sans-serif" fontWeight="900" fontSize="34">
        <textPath href="#garter" startOffset="8">
          HON SOIT QUI MAL Y PENSE
        </textPath>
      </text>
      <path d="M440 520C420 515 418 540 432 560L450 556C500 585 530 582 560 562L572 556C530 556 490 552 460 530Z" stroke={paper} strokeWidth="5" />
      <circle cx="472" cy="552" r="7" fill={paper} />
      <circle cx="508" cy="565" r="7" fill={paper} />
      <path d="M432 525Q448 512 460 532Q440 530 436 545Q448 560 438 560Q420 555 424 538Z" fill={paper} stroke={ink} strokeWidth="4" />
      {/* lion */}
      <path d="M232 215L258 203L312 190L325 180L345 177L349 197L372 219L358 220L385 241L366 243L388 268L374 270L383 300L408 318L386 342L374 372L350 350L395 400L410 430L404 458L390 446L382 454L372 436L358 430L348 410L330 402L300 408L328 425L340 447L324 462L314 487L330 508L368 522L390 526L392 545L372 538L376 554L352 542L345 554L330 535L308 530L304 510L284 490L290 462L280 440L268 470L240 500L216 526L206 560L208 575L228 588L262 584L270 600L248 596L254 612L232 602L226 618L206 606L196 620L190 600L176 598L178 585L168 568L176 560L172 542L184 538L180 524L202 522L215 486L214 440L240 395L256 360L275 312L262 292L256 318L248 290L238 292L246 268L234 272L244 238Z" />
      <path d="M262 224L288 216L284 230L270 230ZM300 210L326 200L320 214L306 216ZM298 240L318 230L322 244L326 262A12 14 0 0 1 302 266L304 248L290 246Z" fill={paper} />
      <path d="M216 435C196 470 176 470 170 455C166 430 220 390 228 350C230 325 215 312 195 316" fill="none" stroke={ink} strokeWidth="9" />
      <path d="M205 312C175 308 155 330 158 342L144 352L150 356C138 366 132 378 132 392C142 376 160 366 178 362C192 356 200 340 196 324ZM148 458C156 470 166 462 180 468L205 470L180 478L168 486L160 472ZM232 424L190 470L200 486L214 470Z" />
      <path d="M254 198L246 178L256 184L262 172L270 182L278 168L286 178L296 166L302 176L310 166L312 184Q280 186 254 198Z" />
      <g>
        {[[238, 166], [240, 155], [249, 147], [259, 146], [276, 142], [288, 137], [299, 138], [307, 146], [308, 157], [242, 177]].map(([x, y], i) => (
          <circle key={i} cx={x} cy={y} r="4.5" />
        ))}
        <path d="M260 130L268 138L276 130L272 142L282 146L270 148V160H264L262 148L254 142L262 140Z" />
      </g>
      {/* unicorn */}
      <path d="M648 117L722 182L732 190L736 176L748 192L784 198L780 208L806 240L800 246L808 290L800 318L790 300L782 322L768 296L740 288L716 272L700 276L690 262L684 264L676 250L664 252L662 232L684 216L704 204L712 200Z" />
      <path d="M700 214L716 212L718 220L706 222ZM672 240L692 236L684 246ZM748 232C750 250 730 268 704 272L720 256L738 252Z" fill={paper} />
      <path d="M690 278L776 322L764 350L684 302Z" fill={paper} stroke={ink} strokeWidth="5" />
      <path d="M700 288L712 300L718 292L724 306L734 300L740 314L750 308L756 324L768 322L760 342L688 300Z" />
      <path d="M680 302L766 346L750 370L762 396L786 420L790 450L785 485L770 510L800 522L806 545L805 580L792 600L800 612L775 622H760L772 600L788 580L786 545L760 520L738 498L735 470L700 478L712 515L680 525L640 535L632 552L605 552L620 532L650 520L680 508L690 490L670 470L680 440L725 420L710 405L680 400L640 396L655 418L660 430L640 422L628 428L634 410L612 380L606 360L640 352L620 330L600 318L596 306L620 302L640 318L645 340L662 350L665 325Z" />
      <path d="M618 366L636 372L642 385L618 376Z" fill={paper} />
      <path d="M785 400C810 430 840 450 850 478C845 490 835 494 822 484M785 400C790 350 810 335 838 338M800 415C830 420 856 450 850 480" fill="none" stroke={ink} strokeWidth="8" />
      <path d="M820 332C850 328 865 345 864 362L882 402C866 384 850 380 838 376C826 366 824 350 836 342ZM808 478L830 488L858 474L850 490L838 502L828 494Z" />
      <g fill="none" stroke={ink} strokeWidth="5">
        <ellipse cx="663" cy="302" rx="10" ry="12" />
        <ellipse cx="645" cy="328" rx="10" ry="12" />
        <ellipse cx="652" cy="384" rx="10" ry="13" />
        <ellipse cx="745" cy="540" rx="10" ry="12" />
        <ellipse cx="770" cy="568" rx="13" ry="11" />
        <ellipse cx="820" cy="562" rx="12" ry="12" />
        <circle cx="850" cy="541" r="18" />
        <ellipse cx="786" cy="410" rx="11" ry="13" fill={paper} />
      </g>
      <circle cx="754" cy="491" r="9" fill={paper} />
      <circle cx="776" cy="456" r="8" fill={paper} />
      {/* pendant */}
      <path d="M480 584H515V606L504 600L498 588L492 600L480 606Z" />
      <path d="M498 592C512 606 510 616 504 628C512 610 532 612 528 630C522 640 512 632 514 626M498 592C484 606 486 616 492 628C484 610 464 612 468 630C474 640 484 632 482 626M480 636H516M490 638L498 656L506 638" fill="none" stroke={ink} strokeWidth="5" />
      <circle cx="498" cy="656" r="6" fill={paper} stroke={ink} strokeWidth="4" />
      {/* motto ribbon */}
      {["", "matrix(-1 0 0 1 996 0)"].map((m) => (
        <g key={m} transform={m || undefined}>
          <path d="M208 634C240 640 270 622 305 590C340 560 390 552 408 570C420 582 426 595 428 606Q405 596 374 602C345 612 320 640 292 655C262 668 240 664 208 634Z" />
          <path d="M375 600C366 635 375 645 395 650L430 655M428 605C436 625 420 640 398 628" fill="none" stroke={ink} strokeWidth="4" />
        </g>
      ))}
      <path d="M382 646Q440 664 498 664T614 646L604 690Q590 714 498 714T392 690Z" />
      <g fill={paper} fontFamily="Lato, sans-serif" fontWeight="900" fontSize="40" textAnchor="middle">
        <text x="498" y="704">ET MON</text>
        <text transform="translate(326 626) rotate(-30)">DIEU</text>
        <text transform="translate(668 626) rotate(28)">DROIT</text>
      </g>
    </svg>
  );
}

const footLink = "underline decoration-2 underline-offset-[7px]";

export default function App() {
  return (
    <div className="min-h-screen bg-[#f3f2f1] font-[Roboto,sans-serif] text-[30px] leading-[39px] text-[#0b0c0c]">
      <div className="bg-white">
        <header>
          <div className="flex items-start bg-[#0b0c0c] px-[58px] pt-5 pb-[19px] text-white">
            <a href="#home" className="flex w-[515px] shrink-0 items-start gap-3" aria-label="GOV.UK">
              <CrownLogo />
              <span className="text-[60px] leading-[60px] font-bold">GOV.UK</span>
            </a>
            <a href="#service" className="max-w-[850px] text-[46px] leading-[58px] font-bold">
              Publish planning and housing data for England
            </a>
          </div>
          <div className="mx-[58px] h-5 bg-[#1d70b8]" />
        </header>

        <div className="px-[58px]">
          <div className="flex items-center gap-5 border-b-2 border-[#b1b4b6] py-[19px] leading-[49px]">
            <strong className="w-[115px] bg-[#1d70b8] text-center font-bold text-white">BETA</strong>
            <p>
              This is a new service – your{" "}
              <a href="#feedback" className={"text-[#1d70b8] " + footLink}>
                feedback
              </a>{" "}
              will help us to improve it.
            </p>
          </div>

          <a href="#back" className="mt-[29px] inline-flex items-center gap-3 pl-[3px]">
            <svg viewBox="0 0 12 22" className="h-[22px] w-3" fill="none" stroke="#505a5f" strokeWidth="2" aria-hidden="true">
              <path d="M11 1L2 11L11 21" />
            </svg>
            <span className={footLink}>Back</span>
          </a>

          <main className="pt-[107px] pb-[137px] text-[36px] leading-[49px]">
            <h1 className="max-w-[971px] text-[70px] leading-[78px] font-bold">Check your data before you continue</h1>
            <p className="mt-[57px]">13 rows can be published.</p>

            <div className="relative mt-[39px] h-[975px] overflow-hidden border-2 border-[#a9abac]">
              <div className="h-full overflow-hidden pl-[29px]">
                <table className="h-[983px] w-[1800px] table-fixed border-collapse text-left">
                  <colgroup>
                    <col className="w-[615px]" />
                    <col className="w-[240px]" />
                    <col className="w-[548px]" />
                    <col />
                  </colgroup>
                  <thead>
                    <tr className="border-b-2 border-[#b1b4b6]">
                      {columns.map((c) => (
                        <th key={c} scope="col" className="h-[90px] p-0 font-bold whitespace-nowrap">
                          {c}
                        </th>
                      ))}
                    </tr>
                  </thead>
                  <tbody>
                    {rows.map(([name, date]) => (
                      <tr key={name} className="border-b-2 border-[#b1b4b6]">
                        <td className="p-0">{name}</td>
                        <td className="p-0">{date}</td>
                        <td className="p-0">test</td>
                        <td className="p-0" />
                      </tr>
                    ))}
                  </tbody>
                </table>
              </div>
              <div className="pointer-events-none absolute inset-y-0 right-0 w-5 bg-linear-to-r from-transparent to-black/30" />
            </div>

            <p className="mt-[58px]">Here’s your data on a map:</p>

            <div className="relative mt-[38px] overflow-hidden">
              <MapDrawing />
              <div className="absolute right-5 bottom-[19px] flex items-center rounded-full bg-white pl-4 text-[23px] leading-[47px] text-[#404040]">
                <p className="pr-1">
                  <a href="#maplibre">MapLibre</a> <span className="text-black">|</span> <a href="#maptiler">© MapTiler</a>{" "}
                  <a href="#osm">© OpenStreetMap contributors</a>
                </p>
                <button type="button" aria-label="Toggle attribution" className="rounded-full bg-black/5">
                  <svg viewBox="0 0 20 20" className="h-[47px] w-[47px]" fill="#000" fillRule="evenodd" aria-hidden="true">
                    <path d="M4 10a6 6 0 1 0 12 0 6 6 0 1 0-12 0m5-3a1 1 0 1 0 2 0 1 1 0 1 0-2 0m0 3a1 1 0 1 1 2 0v3a1 1 0 1 1-2 0" />
                  </svg>
                </button>
              </div>
            </div>

            <form className="mt-[59px]">
              <fieldset>
                <legend className="text-[46px] leading-[58px] font-bold">Is your data correct?</legend>
                <div className="mt-7 flex flex-col gap-[19px]">
                  {[
                    ["yes", "Yes"],
                    ["no", "No, I need to fix it"],
                  ].map(([id, label]) => (
                    <div key={id} className="flex items-center gap-[29px]">
                      <input
                        id={id}
                        type="radio"
                        name="correct"
                        value={id}
                        className="h-[78px] w-[78px] shrink-0 appearance-none rounded-full border-4 border-[#0b0c0c] bg-white checked:bg-[#0b0c0c] checked:shadow-[inset_0_0_0_14px_#fff]"
                      />
                      <label htmlFor={id} className="pt-1">
                        {label}
                      </label>
                    </div>
                  ))}
                </div>
              </fieldset>
              <button type="submit" className="mt-[58px] block h-[78px] border-b-4 border-[#002d18] bg-[#00703c] px-[25px] pt-1 text-white">
                Continue
              </button>
            </form>
          </main>
        </div>
      </div>

      <footer className="border-t-2 border-[#b1b4b6] px-[58px] pt-[77px] pb-[97px]">
        <h2 className="text-[46px] leading-[58px] font-bold">Get help</h2>
        <p className="mt-[39px]">
          Email:{" "}
          <a href="mailto:digitalland@levellingup.gov.uk" className={"text-[#1d70b8] " + footLink}>
            digitalland@levellingup.gov.uk
          </a>
          <br />
          You’ll get a response within 5 working days.
        </p>
        <div className="mt-[63px] flex items-end justify-between">
          <div>
            <a href="#accessibility" className={footLink}>
              Accessibility
            </a>
            <svg viewBox="0 0 80 33" className="mt-12 mb-[6px] block h-[33px] w-20" role="img" aria-label="Open Government Licence">
              <text x="-1 27 57" y="32" fill="#0b0c0c" stroke="#0b0c0c" strokeWidth="2" fontFamily="Lato, sans-serif" fontWeight="900" fontSize="42">
                OGL
              </text>
            </svg>
            <p className="max-w-[1110px]">
              All content is available under the{" "}
              <a href="#ogl" className={footLink}>
                Open Government Licence v3.0
              </a>
              , except where otherwise stated
            </p>
          </div>
          <a href="#copyright" className="flex shrink-0 flex-col items-center gap-5 whitespace-nowrap">
            <RoyalArms />
            <span className={footLink}>© Crown copyright</span>
          </a>
        </div>
      </footer>
    </div>
  );
}
